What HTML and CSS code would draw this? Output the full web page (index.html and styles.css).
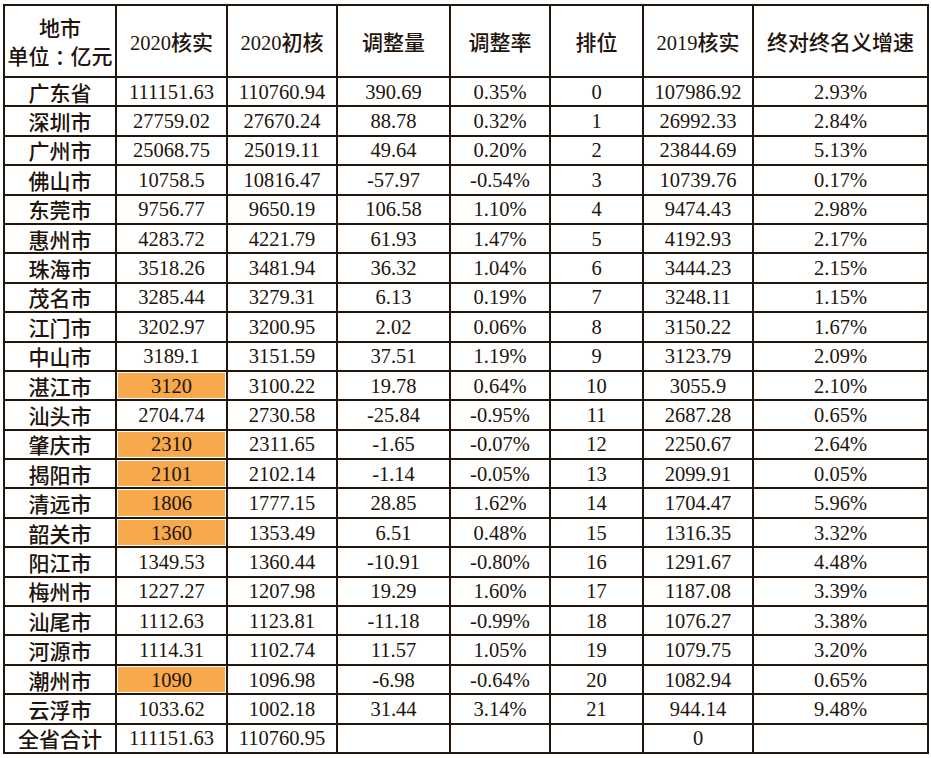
FILE: index.html
```html
<!DOCTYPE html>
<html lang="zh">
<head>
<meta charset="utf-8">
<title>广东各市GDP核实</title>
<link rel="stylesheet" href="styles.css">
</head>
<body>
<table class="gdp">
  <colgroup>
    <col class="c1"><col class="c2"><col class="c3"><col class="c4"><col class="c5"><col class="c6"><col class="c7"><col class="c8">
  </colgroup>
  <thead>
    <tr class="head">
      <th class="city">地市<br>单位<span class="colon">：</span>亿元</th>
      <th>2020<span class="cjk">核实</span></th>
      <th>2020<span class="cjk">初核</span></th>
      <th class="cn">调整量</th>
      <th class="cn">调整率</th>
      <th class="cn">排位</th>
      <th>2019<span class="cjk">核实</span></th>
      <th class="cn">终对终名义增速</th>
    </tr>
  </thead>
  <tbody>
    <tr><td class="city">广东省</td><td>111151.63</td><td>110760.94</td><td>390.69</td><td>0.35%</td><td>0</td><td>107986.92</td><td>2.93%</td></tr>
    <tr><td class="city">深圳市</td><td>27759.02</td><td>27670.24</td><td>88.78</td><td>0.32%</td><td>1</td><td>26992.33</td><td>2.84%</td></tr>
    <tr><td class="city">广州市</td><td>25068.75</td><td>25019.11</td><td>49.64</td><td>0.20%</td><td>2</td><td>23844.69</td><td>5.13%</td></tr>
    <tr><td class="city">佛山市</td><td>10758.5</td><td>10816.47</td><td>-57.97</td><td>-0.54%</td><td>3</td><td>10739.76</td><td>0.17%</td></tr>
    <tr><td class="city">东莞市</td><td>9756.77</td><td>9650.19</td><td>106.58</td><td>1.10%</td><td>4</td><td>9474.43</td><td>2.98%</td></tr>
    <tr><td class="city">惠州市</td><td>4283.72</td><td>4221.79</td><td>61.93</td><td>1.47%</td><td>5</td><td>4192.93</td><td>2.17%</td></tr>
    <tr><td class="city">珠海市</td><td>3518.26</td><td>3481.94</td><td>36.32</td><td>1.04%</td><td>6</td><td>3444.23</td><td>2.15%</td></tr>
    <tr><td class="city">茂名市</td><td>3285.44</td><td>3279.31</td><td>6.13</td><td>0.19%</td><td>7</td><td>3248.11</td><td>1.15%</td></tr>
    <tr><td class="city">江门市</td><td>3202.97</td><td>3200.95</td><td>2.02</td><td>0.06%</td><td>8</td><td>3150.22</td><td>1.67%</td></tr>
    <tr><td class="city">中山市</td><td>3189.1</td><td>3151.59</td><td>37.51</td><td>1.19%</td><td>9</td><td>3123.79</td><td>2.09%</td></tr>
    <tr><td class="city">湛江市</td><td class="hl">3120</td><td>3100.22</td><td>19.78</td><td>0.64%</td><td>10</td><td>3055.9</td><td>2.10%</td></tr>
    <tr><td class="city">汕头市</td><td>2704.74</td><td>2730.58</td><td>-25.84</td><td>-0.95%</td><td>11</td><td>2687.28</td><td>0.65%</td></tr>
    <tr><td class="city">肇庆市</td><td class="hl">2310</td><td>2311.65</td><td>-1.65</td><td>-0.07%</td><td>12</td><td>2250.67</td><td>2.64%</td></tr>
    <tr><td class="city">揭阳市</td><td class="hl">2101</td><td>2102.14</td><td>-1.14</td><td>-0.05%</td><td>13</td><td>2099.91</td><td>0.05%</td></tr>
    <tr><td class="city">清远市</td><td class="hl">1806</td><td>1777.15</td><td>28.85</td><td>1.62%</td><td>14</td><td>1704.47</td><td>5.96%</td></tr>
    <tr><td class="city">韶关市</td><td class="hl">1360</td><td>1353.49</td><td>6.51</td><td>0.48%</td><td>15</td><td>1316.35</td><td>3.32%</td></tr>
    <tr><td class="city">阳江市</td><td>1349.53</td><td>1360.44</td><td>-10.91</td><td>-0.80%</td><td>16</td><td>1291.67</td><td>4.48%</td></tr>
    <tr><td class="city">梅州市</td><td>1227.27</td><td>1207.98</td><td>19.29</td><td>1.60%</td><td>17</td><td>1187.08</td><td>3.39%</td></tr>
    <tr><td class="city">汕尾市</td><td>1112.63</td><td>1123.81</td><td>-11.18</td><td>-0.99%</td><td>18</td><td>1076.27</td><td>3.38%</td></tr>
    <tr><td class="city">河源市</td><td>1114.31</td><td>1102.74</td><td>11.57</td><td>1.05%</td><td>19</td><td>1079.75</td><td>3.20%</td></tr>
    <tr><td class="city">潮州市</td><td class="hl">1090</td><td>1096.98</td><td>-6.98</td><td>-0.64%</td><td>20</td><td>1082.94</td><td>0.65%</td></tr>
    <tr><td class="city">云浮市</td><td>1033.62</td><td>1002.18</td><td>31.44</td><td>3.14%</td><td>21</td><td>944.14</td><td>9.48%</td></tr>
    <tr><td class="city">全省合计</td><td>111151.63</td><td>110760.95</td><td></td><td></td><td></td><td>0</td><td></td></tr>
  </tbody>
</table>
</body>
</html>
```

FILE: styles.css
```css
html, body {
  margin: 0;
  padding: 0;
  background: #ffffff;
}

body {
  padding: 4px 0 0 3px;
}

.gdp {
  border-collapse: collapse;
  table-layout: fixed;
  width: 924px;
  font-family: "Liberation Serif", "Noto Sans CJK SC", serif;
  font-size: 20.5px;
  color: #22140c;
}

.c1 { width: 112px; }
.c2 { width: 111px; }
.c3 { width: 110px; }
.c4 { width: 113px; }
.c5 { width: 100px; }
.c6 { width: 93px; }
.c7 { width: 110px; }
.c8 { width: 175px; }

.gdp th,
.gdp td {
  border: 2px solid #24150d;
  text-align: center;
  vertical-align: middle;
  padding: 0;
  font-weight: normal;
  line-height: 24px;
  white-space: nowrap;
}

.gdp .head th {
  height: 70px;
}

.gdp tbody tr {
  height: 29.4px;
}

.gdp .city,
.gdp .cn,
.gdp .cjk {
  font-family: "Noto Sans CJK SC", sans-serif;
  font-size: 21px;
  font-weight: 500;
  line-height: 26px;
}

.gdp .head .city {
  line-height: 28px;
}

.gdp .colon {
  display: inline-block;
  width: 1em;
  text-align: center;
  font-feature-settings: "halt";
}

.gdp .hl {
  background: #f7a94c;
  box-shadow: inset 0 0 0 1px #ffffff;
}
```
